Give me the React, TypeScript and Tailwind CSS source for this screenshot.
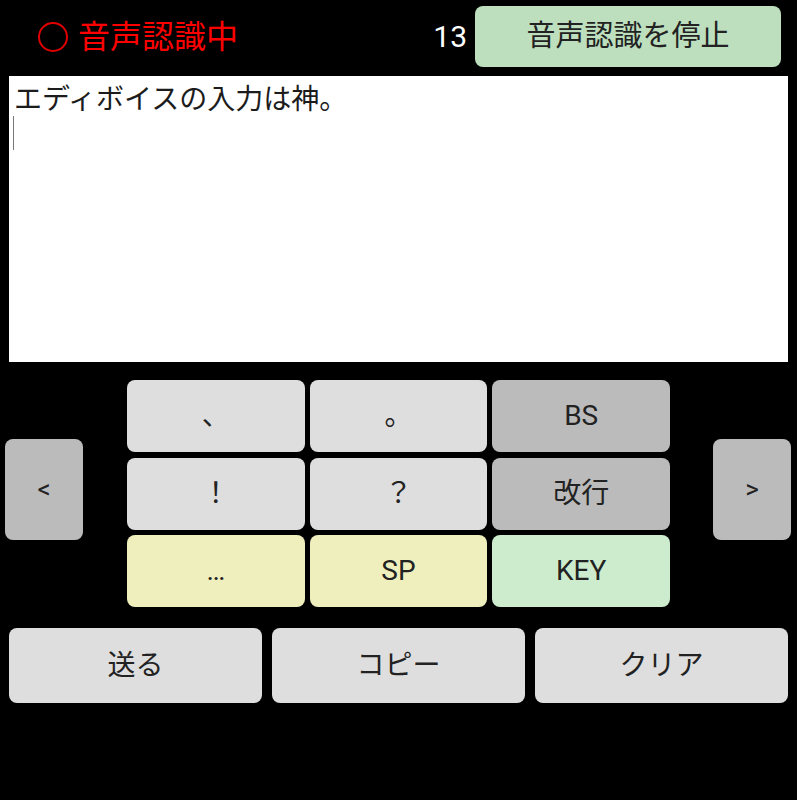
const font = { fontFamily: 'Roboto, "Noto Sans CJK JP", sans-serif' }

function Key({ label, className }: { label: string; className: string }) {
  return (
    <div
      className={`flex items-center justify-center rounded-lg text-[28px] text-[#222] ${className}`}
    >
      {label}
    </div>
  )
}

export default function App() {
  return (
    <div className="h-[800px] w-[797px] bg-black" style={font}>
      {/* header */}
      <div className="flex items-center pt-[6px]">
        <div className="ml-[38px] h-[30px] w-[30px] rounded-full border-2 border-[#e00000]" />
        <div className="ml-[10px] text-[32px] leading-none text-[#ff0000]">音声認識中</div>
        <div className="ml-auto mr-[8px] text-[30px] leading-none text-white">13</div>
        <div className="mr-[16px] flex h-[61px] w-[306px] items-center justify-center rounded-lg bg-[#bddfbd] pt-[1px] text-[29px] text-[#222]">
          音声認識を停止
        </div>
      </div>

      {/* text area */}
      <div className="mx-[9px] mt-[9px] h-[286px] bg-white px-[5px] pt-[6px] text-[28px] leading-[36px] text-[#1c1c1c]">
        <div>エディボイスの入力は神。</div>
        <div className="ml-[-1px] mt-[-2px] h-[34px] w-px bg-[#777]" />
      </div>

      {/* keyboard */}
      <div className="mt-[18px] flex">
        <div className="ml-[5px] mt-[59px] flex h-[101px] w-[78px] items-center justify-center rounded-lg bg-[#bbbbbb] text-[26px] text-[#222]">
          &lt;
        </div>
        <div className="ml-[44px] grid w-[543px] grid-cols-3 grid-rows-[72px_72px_72px] gap-x-[5px] gap-y-[5.5px]">
          <Key label="、" className="bg-[#dedede]" />
          <Key label="。" className="bg-[#dedede]" />
          <Key label="BS" className="bg-[#bbbbbb]" />
          <Key label="！" className="bg-[#dedede]" />
          <Key label="？" className="bg-[#dedede]" />
          <Key label="改行" className="bg-[#bbbbbb]" />
          <Key label="…" className="bg-[#efefbd]" />
          <Key label="SP" className="bg-[#efefbd]" />
          <Key label="KEY" className="bg-[#cdeccd]" />
        </div>
        <div className="ml-[43px] mt-[59px] flex h-[101px] w-[78px] items-center justify-center rounded-lg bg-[#bbbbbb] text-[26px] text-[#222]">
          &gt;
        </div>
      </div>

      {/* bottom buttons */}
      <div className="mx-[9px] mt-[21px] grid h-[75px] grid-cols-3 gap-[10px]">
        <Key label="送る" className="bg-[#dedede]" />
        <Key label="コピー" className="bg-[#dedede]" />
        <Key label="クリア" className="bg-[#dedede]" />
      </div>
    </div>
  )
}
